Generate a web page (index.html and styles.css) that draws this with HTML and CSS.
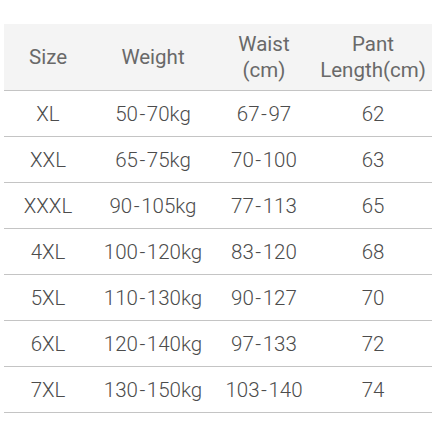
FILE: index.html
```html
<!DOCTYPE html>
<html>
<head>
<meta charset="utf-8">
<link rel="stylesheet" href="styles.css">
</head>
<body>
<div class="wrap">
<table class="sizes">
<thead>
<tr><th>Size</th><th>Weight</th><th>Waist<br>(cm)</th><th>Pant<br>Length(cm)</th></tr>
</thead>
<tbody>
<tr><td>XL</td><td>50<span class="dash">-</span>70kg</td><td>67<span class="dash">-</span>97</td><td>62</td></tr>
<tr><td>XXL</td><td>65<span class="dash">-</span>75kg</td><td>70<span class="dash">-</span>100</td><td>63</td></tr>
<tr><td>XXXL</td><td>90<span class="dash">-</span>105kg</td><td>77<span class="dash">-</span>113</td><td>65</td></tr>
<tr><td>4XL</td><td>100<span class="dash">-</span>120kg</td><td>83<span class="dash">-</span>120</td><td>68</td></tr>
<tr><td>5XL</td><td>110<span class="dash">-</span>130kg</td><td>90<span class="dash">-</span>127</td><td>70</td></tr>
<tr><td>6XL</td><td>120<span class="dash">-</span>140kg</td><td>97<span class="dash">-</span>133</td><td>72</td></tr>
<tr><td>7XL</td><td>130<span class="dash">-</span>150kg</td><td>103<span class="dash">-</span>140</td><td>74</td></tr>
</tbody>
</table>
</div>
</body>
</html>
```
FILE: styles.css
```css
html, body { margin: 0; padding: 0; background: #fff; }
.wrap { padding: 24px 4px 0 4px; }
.sizes {
  width: 428px;
  border-collapse: collapse;
  table-layout: fixed;
}
.sizes th {
  background: #f4f4f4;
  color: #696969;
  font-family: Roboto, "Liberation Sans", sans-serif;
  font-weight: 400;
  font-size: 20.5px;
  line-height: 26px;
  height: 66px;
  padding: 0;
  text-align: center;
  border-bottom: 1px solid #c4c4c4;
}
.sizes th:nth-child(1), .sizes td:nth-child(1) { width: 88px; }
.sizes th:nth-child(2), .sizes td:nth-child(2) { width: 122px; }
.sizes th:nth-child(3), .sizes td:nth-child(3) { width: 100px; }
.sizes th:nth-child(4), .sizes td:nth-child(4) { width: 118px; }
.sizes td {
  color: #4c4c4c;
  font-family: Roboto, "Liberation Sans", sans-serif;
  font-weight: 300;
  font-size: 20.5px;
  height: 45px;
  padding: 0;
  text-align: center;
  border-bottom: 1px solid #c4c4c4;
}
.dash { margin: 0 1.5px; }
```
